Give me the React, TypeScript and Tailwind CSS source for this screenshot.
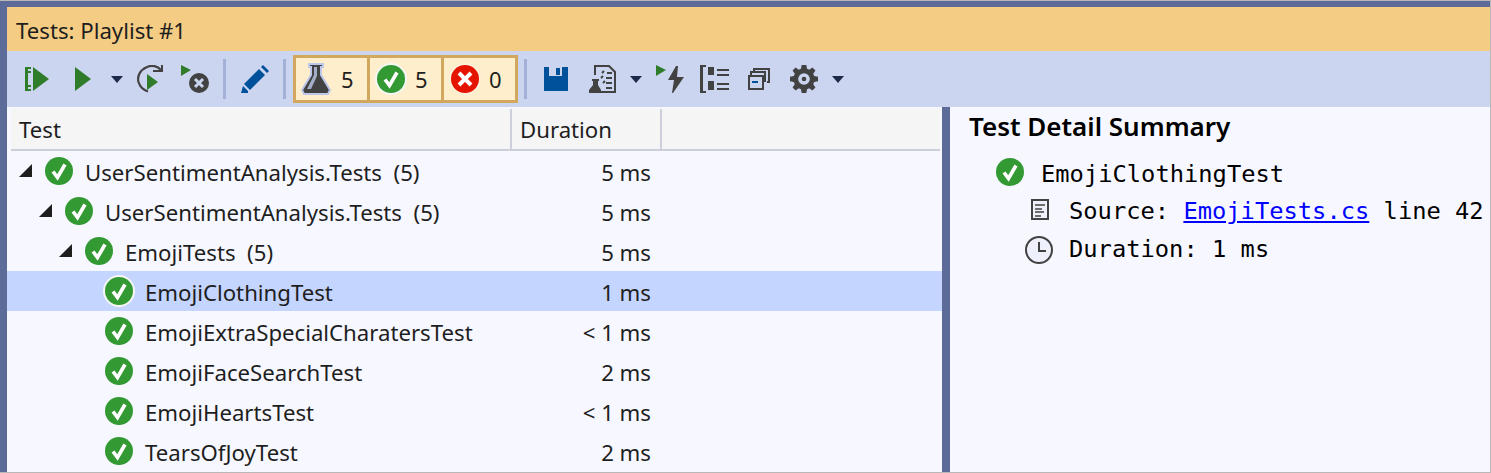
import type { ReactNode } from 'react';

const sans = 'font-["Noto_Sans","Open_Sans",sans-serif]';
const mono = 'font-["DejaVu_Sans_Mono","Liberation_Mono",monospace]';

function CheckIcon({ halo = false, size = 28 }: { halo?: boolean; size?: number }) {
  const scale = size === 28 ? '0 0 28 28' : '-2 -2 32 32';
  return (
    <svg width={size} height={size} viewBox={scale} className="shrink-0">
      {halo && <circle cx="14" cy="14" r="16" fill="#f6f6f6" />}
      <circle cx="14" cy="14" r="14" fill="#339933" />
      <path d="M8 14.500l4.500 6L20 7.500" fill="none" stroke="#fff" strokeWidth="3.600" />
    </svg>
  );
}

function Caret({ className = '' }: { className?: string }) {
  return (
    <svg width="12" height="7" viewBox="0 0 12 7" className={`shrink-0 ${className}`}>
      <path d="M0 0h12L6 7z" fill="#1e2a4a" />
    </svg>
  );
}

function Sep({ className = '' }: { className?: string }) {
  return <div className={`w-[3px] h-[40px] bg-[#a3b1d6] shrink-0 ${className}`} />;
}

function RunAllIcon() {
  return (
    <svg width="26" height="24" viewBox="0 0 26 24" className="shrink-0">
      <path d="M0 0h6v2H3v2h3v2H3v12h3v2H3v2h3v2H0z" fill="#2f7d2a" />
      <path d="M8 0l16 12L8 24z" fill="#2f7d2a" />
    </svg>
  );
}

function PlayIcon() {
  return (
    <svg width="16" height="24" viewBox="0 0 16 24" className="ml-[24px] shrink-0">
      <path d="M0 0l16 12L0 24z" fill="#2f7d2a" />
    </svg>
  );
}

function RepeatIcon() {
  return (
    <svg width="28" height="28" viewBox="0 0 28 28" className="ml-[14px] shrink-0">
      <path d="M24 5a12 12 0 0 0-14-3C3 5 0 11 1.500 17c1.500 5 5 8 9.500 9.500" fill="none" stroke="#424242" strokeWidth="2.200" />
      <path d="M16 7h10V0h-2v5h-8z" fill="#424242" />
      <path d="M10 9l11 8-11 8z" fill="#2f7d2a" />
    </svg>
  );
}

function CancelIcon() {
  return (
    <svg width="29" height="28" viewBox="0 0 29 28" className="ml-[16px] shrink-0">
      <path d="M0 0l10 5-10 6z" fill="#2f7d2a" />
      <circle cx="18" cy="18" r="10" fill="#424242" />
      <path d="M14 14l8 8M22 14l-8 8" stroke="#ccd5f0" strokeWidth="3" />
    </svg>
  );
}

function PencilIcon() {
  return (
    <svg width="28" height="28" viewBox="0 0 28 28" className="ml-[15px] shrink-0">
      <path d="M3 19L18 4l6 6L9 25z" fill="#00519c" />
      <path d="M20 2l2-2 6 6-2 2z" fill="#00519c" />
      <path d="M0 28l2-7 5 5v2z" fill="#00519c" />
    </svg>
  );
}

function FlaskIcon() {
  return (
    <svg width="30" height="32" viewBox="0 0 30 32" className="shrink-0">
      <path d="M8 1h14v3h-2v8l9 15-2 4H3l-2-4 9-15V4H8z" fill="#424242" stroke="#bcc7ea" strokeWidth="2" />
      <path d="M13 4h3v9l-6 13H6l7-14z" fill="#a4aec9" />
    </svg>
  );
}

function ErrorIcon() {
  return (
    <svg width="32" height="32" viewBox="0 0 32 32" className="shrink-0">
      <circle cx="16" cy="16" r="16" fill="#fdf1dc" />
      <circle cx="16" cy="16" r="14" fill="#e51400" />
      <path d="M10 10l12 12M22 10L10 22" stroke="#fff" strokeWidth="4" />
    </svg>
  );
}

function SaveIcon() {
  return (
    <svg width="24" height="24" viewBox="0 0 24 24" className="ml-[17px] shrink-0">
      <path d="M0 0h24v24H0z" fill="#00519c" />
      <path d="M5 0h13v9H5z" fill="#ccd5f0" />
      <path d="M12 1h4v7h-4z" fill="#00519c" />
    </svg>
  );
}

function PlaylistIcon() {
  return (
    <svg width="28" height="28" viewBox="0 0 28 28" fill="none" className="ml-[20px] shrink-0">
      <path d="M7 10V1h14l6 6v20H13" stroke="#424242" strokeWidth="2" />
      <path d="M14 8l2-2M13 13l2-2M15 18l2-2" stroke="#424242" strokeWidth="2" />
      <path d="M19 8h5M18 13h6M18 18h6M18 23h6" stroke="#424242" strokeWidth="2" />
      <path d="M4 14h7v2h-1v4l3 5v3H1v-3l4-5v-4H4z" fill="#424242" />
    </svg>
  );
}

function BoltIcon() {
  return (
    <svg width="28" height="28" viewBox="0 0 28 28" className="ml-[14px] shrink-0">
      <path d="M0 0l10 5L0 11z" fill="#2f7d2a" />
      <path d="M20 1L12 15h6l-2 13h1l11-16h-7l1-11z" fill="#424242" />
    </svg>
  );
}

function GroupIcon() {
  return (
    <svg width="29" height="28" viewBox="0 0 29 28" fill="#424242" className="ml-[16px] shrink-0">
      <path d="M0 0h6v2H3v24h3v2H0z" />
      <path d="M8 2h6v8H8zM8 16h6v9H8z" />
      <path d="M17 4h12v2H17zM17 9h12v2H17zM17 18h12v2H17zM17 23h12v2H17z" />
    </svg>
  );
}

function CollapseIcon() {
  return (
    <svg width="22" height="22" viewBox="0 0 22 22" fill="none" stroke="#424242" className="ml-[19px] shrink-0">
      <path d="M6 4V1h15v13h-2" strokeWidth="2" />
      <path d="M3 7V4h14v10" strokeWidth="2" />
      <rect x="1" y="8" width="14" height="13" strokeWidth="2" fill="#ccd5f0" />
      <path d="M4 14h6" stroke="#00519c" strokeWidth="2" />
    </svg>
  );
}

function GearIcon() {
  return (
    <svg width="28" height="28" viewBox="0 0 24 24" className="ml-[20px] shrink-0">
      <path
        fillRule="evenodd"
        fill="#424242"
        d="M10 0h4l.6 3.200 1.900.8 2.700-1.800 2.600 2.600L19.900 7.500l.8 1.900 3.300.6v4l-3.300.6-.8 1.900 1.900 2.700-2.600 2.600-2.700-1.800-1.900.8-.6 3.200h-4l-.6-3.200-1.900-.8-2.700 1.800-2.600-2.600 1.900-2.700-.8-1.900L0 14v-4l3.300-.6.8-1.900-1.900-2.700 2.600-2.600 2.700 1.800 1.900-.8zM12 7a5 5 0 1 0 0 10 5 5 0 0 0 0-10z"
      />
      <circle cx="12" cy="12" r="2" fill="#424242" />
    </svg>
  );
}

function FileIcon() {
  return (
    <svg width="18" height="21" viewBox="0 0 18 21" fill="none" stroke="#424242" strokeWidth="2" className="shrink-0 mb-[5px]">
      <rect x="1" y="1" width="16" height="19" fill="#eef0fb" />
      <path d="M4 6h10M4 10h7M4 13h9M4 17h6" strokeWidth="1.600" />
    </svg>
  );
}

function ClockIcon() {
  return (
    <svg width="28" height="28" viewBox="0 0 28 28" fill="none" stroke="#424242" strokeWidth="2" className="shrink-0">
      <circle cx="14" cy="14" r="13" fill="#eef0fb" />
      <path d="M14 6v9h7" />
    </svg>
  );
}

function Counter({ icon, count }: { icon: ReactNode; count: number }) {
  return (
    <div className="h-[48px] w-[77px] border-[3px] border-[#d2a85f] -ml-[3px] first:ml-0 bg-[#feeecb] flex items-center pl-[5px] text-[22px] text-[#1e1e1e] shrink-0">
      <div className="w-[40px] shrink-0">{icon}</div>
      <span>{count}</span>
    </div>
  );
}

const rows = [
  { name: 'UserSentimentAnalysis.Tests', count: '(5)', time: '5 ms', depth: 0 },
  { name: 'UserSentimentAnalysis.Tests', count: '(5)', time: '5 ms', depth: 1 },
  { name: 'EmojiTests', count: '(5)', time: '5 ms', depth: 2 },
  { name: 'EmojiClothingTest', time: '1 ms', depth: 3, selected: true },
  { name: 'EmojiExtraSpecialCharatersTest', time: '< 1 ms', depth: 3 },
  { name: 'EmojiFaceSearchTest', time: '2 ms', depth: 3 },
  { name: 'EmojiHeartsTest', time: '< 1 ms', depth: 3 },
  { name: 'TearsOfJoyTest', time: '2 ms', depth: 3 },
];

const indents = ['pl-[12px]', 'pl-[32px]', 'pl-[52px]', 'pl-[98px]'];

export default function App() {
  return (
    <div className={`${sans} w-[1491px] h-[473px] bg-[#5d6b99] border-t border-r border-b border-[#b8b8b8] pt-[6px] pl-[7px] overflow-hidden flex flex-col text-[#1e1e1e]`}>
      <div className="h-[44px] bg-[#f5cc84] shrink-0 pl-[9px] text-[22.200px] flex items-center pt-[3px]">
        Tests: Playlist #1
      </div>
      <div className="h-[56px] bg-[#ccd5f0] shrink-0 flex items-center pl-[18px]">
        <RunAllIcon />
        <PlayIcon />
        <Caret className="ml-[20px]" />
        <RepeatIcon />
        <CancelIcon />
        <Sep className="ml-[13px]" />
        <PencilIcon />
        <Sep className="ml-[14px]" />
        <div className="flex ml-[7px]">
          <Counter icon={<FlaskIcon />} count={5} />
          <Counter icon={<CheckIcon halo size={32} />} count={5} />
          <Counter icon={<ErrorIcon />} count={0} />
        </div>
        <Sep className="ml-[6px]" />
        <SaveIcon />
        <PlaylistIcon />
        <Caret className="ml-[14px]" />
        <BoltIcon />
        <GroupIcon />
        <CollapseIcon />
        <GearIcon />
        <Caret className="ml-[14px]" />
      </div>
      <div className="flex flex-1 min-h-0">
        <div className="w-[935px] bg-[#f7f8ff] shrink-0 text-[22.200px]">
          <div className="h-[42px] flex bg-[#f5f5f5] border-b-2 border-[#ccced9] ml-[4px] mr-[2px] mt-[2px]">
            <div className="w-[501px] pl-[8px] pt-[2px] flex items-center border-r-2 border-[#ccced9]">Test</div>
            <div className="w-[150px] pl-[8px] pt-[2px] flex items-center border-r-2 border-[#ccced9]">Duration</div>
          </div>
          {rows.map((row, i) => (
            <div key={i} className={`h-[40px] flex items-center ${row.selected ? 'bg-[#c4d5ff]' : ''}`}>
              <div className={`w-[560px] shrink-0 flex items-center ${row.selected ? 'pl-[96px]' : indents[row.depth]}`}>
                {row.depth < 3 && (
                  <svg width="13" height="13" viewBox="0 0 13 13" className="mr-[13px] shrink-0">
                    <path d="M13 0v13H0z" fill="#1e1e1e" />
                  </svg>
                )}
                <CheckIcon halo={row.selected} size={row.selected ? 32 : 28} />
                <span className={`${row.selected ? 'ml-[10px]' : 'ml-[12px]'} pt-[4px] whitespace-pre`}>
                  {row.name}
                  {row.count ? `  ${row.count}` : ''}
                </span>
              </div>
              <div className="w-[84px] text-right pt-[4px] whitespace-pre">{row.time}</div>
            </div>
          ))}
        </div>
        <div className="w-[8px] bg-[#5d6b99] shrink-0" />
        <div className="flex-1 bg-[#f7f8ff] text-black">
          <div className="pl-[19px] h-[39px] flex items-center text-[26px] font-semibold">Test Detail Summary</div>
          <div className={`${mono} text-[23.750px] pl-[46px]`}>
            <div className="h-[47px] pt-[5px] flex items-center gap-[17px]">
              <CheckIcon />
              <span className="pt-[5px]">EmojiClothingTest</span>
            </div>
            <div className="h-[38px] flex items-center pl-[35px]">
              <FileIcon />
              <span className="ml-[20px] whitespace-pre">Source: </span>
              <span className="text-[#0000ff] underline">EmojiTests.cs</span>
              <span className="whitespace-pre"> line 42</span>
            </div>
            <div className="h-[38px] flex items-center pl-[29px]">
              <ClockIcon />
              <span className="ml-[16px]">Duration: 1 ms</span>
            </div>
          </div>
        </div>
      </div>
    </div>
  );
}
